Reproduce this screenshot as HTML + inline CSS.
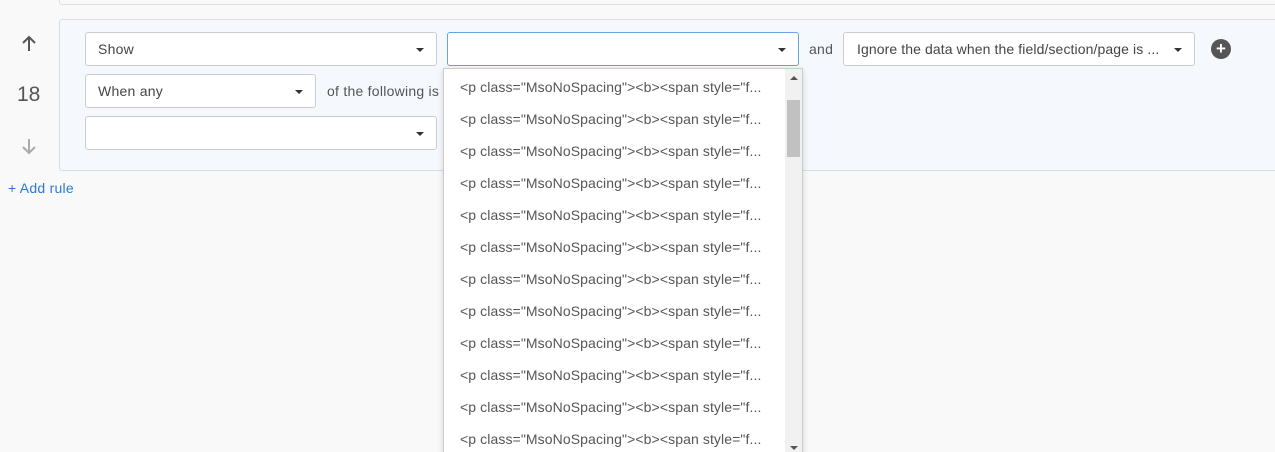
<!DOCTYPE html>
<html style="overflow:hidden;height:452px"><head><style>
body{margin:0;width:1275px;height:452px;background:#f9f9f9;font-family:"Liberation Sans",sans-serif;font-size:14px;letter-spacing:0.25px;color:#333;position:relative;overflow:hidden}
.a{position:absolute}
.sel{position:absolute;background:#fff;border:1px solid #ccc;border-radius:3px;box-sizing:border-box;height:34px;line-height:33px;padding-left:12px;color:#444}
.sel:after{content:"";position:absolute;right:12px;top:15px;border-left:4px solid transparent;border-right:4px solid transparent;border-top:4px solid #333}
.it{position:absolute;left:16px;color:#555;font-size:14px;letter-spacing:0.1px}
</style></head><body>
<div class="a" style="left:59px;top:-5px;width:1230px;height:8px;border:1px solid #ddd;background:#f9f9f9;border-radius:3px"></div>
<div class="a" style="left:59px;top:19px;width:1230px;height:150px;border:1px solid #d8dde3;background:#f5f9fd;border-radius:3px"></div>
<svg class="a" style="left:20px;top:35px" width="18" height="18" viewBox="0 0 18 18"><path d="M9 16V2M3 8l6-6 6 6" stroke="#555" stroke-width="2" fill="none"/></svg>
<div class="a" style="left:17px;top:83px;font-size:21px;color:#555;letter-spacing:0">18</div>
<svg class="a" style="left:20px;top:137px" width="18" height="18" viewBox="0 0 18 18"><path d="M9 2v14M3 10l6 6 6-6" stroke="#aaa" stroke-width="2" fill="none"/></svg>
<div class="a" style="left:8px;top:180px;color:#2a7ad5">+ Add rule</div>
<div class="sel" style="left:85px;top:32px;width:352px">Show</div>
<div class="sel" style="left:447px;top:32px;width:352px;border-color:#66a3e0"></div>
<div class="a" style="left:809px;top:41px;color:#555">and</div>
<div class="sel" style="left:843px;top:32px;width:352px;padding-left:13px;letter-spacing:0.1px">Ignore the data when the field/section/page is ...</div>
<div class="a" style="left:1211px;top:39px;width:20px;height:20px;border-radius:50%;background:#555;color:#fff;text-align:center;line-height:20px;font-weight:bold;font-size:17px;letter-spacing:0">+</div>
<div class="sel" style="left:85px;top:74px;width:231px">When any</div>
<div class="a" style="left:327px;top:83px;color:#555">of the following is</div>
<div class="sel" style="left:85px;top:116px;width:352px"></div>
<div class="a" style="left:443px;top:68px;width:360px;height:390px;background:#fff;border:1px solid #ccc;box-sizing:border-box;box-shadow:0 2px 6px rgba(0,0,0,.15)">
<div class="a" style="right:0;top:0;width:17px;height:390px;background:#f1f1f1"></div>
<div class="a" style="right:2px;top:31px;width:13px;height:57px;background:#c1c1c1"></div>
<div class="a" style="right:4px;top:7px;border-left:4px solid transparent;border-right:4px solid transparent;border-bottom:4px solid #555"></div>
<div class="a" style="right:4px;top:377px;border-left:4px solid transparent;border-right:4px solid transparent;border-top:4px solid #555"></div>
<div class="it" style="top:10px">&lt;p class="MsoNoSpacing"&gt;&lt;b&gt;&lt;span style="f...</div>
<div class="it" style="top:42px">&lt;p class="MsoNoSpacing"&gt;&lt;b&gt;&lt;span style="f...</div>
<div class="it" style="top:74px">&lt;p class="MsoNoSpacing"&gt;&lt;b&gt;&lt;span style="f...</div>
<div class="it" style="top:106px">&lt;p class="MsoNoSpacing"&gt;&lt;b&gt;&lt;span style="f...</div>
<div class="it" style="top:138px">&lt;p class="MsoNoSpacing"&gt;&lt;b&gt;&lt;span style="f...</div>
<div class="it" style="top:170px">&lt;p class="MsoNoSpacing"&gt;&lt;b&gt;&lt;span style="f...</div>
<div class="it" style="top:202px">&lt;p class="MsoNoSpacing"&gt;&lt;b&gt;&lt;span style="f...</div>
<div class="it" style="top:234px">&lt;p class="MsoNoSpacing"&gt;&lt;b&gt;&lt;span style="f...</div>
<div class="it" style="top:266px">&lt;p class="MsoNoSpacing"&gt;&lt;b&gt;&lt;span style="f...</div>
<div class="it" style="top:298px">&lt;p class="MsoNoSpacing"&gt;&lt;b&gt;&lt;span style="f...</div>
<div class="it" style="top:330px">&lt;p class="MsoNoSpacing"&gt;&lt;b&gt;&lt;span style="f...</div>
<div class="it" style="top:362px">&lt;p class="MsoNoSpacing"&gt;&lt;b&gt;&lt;span style="f...</div>
</div>
</body></html>
